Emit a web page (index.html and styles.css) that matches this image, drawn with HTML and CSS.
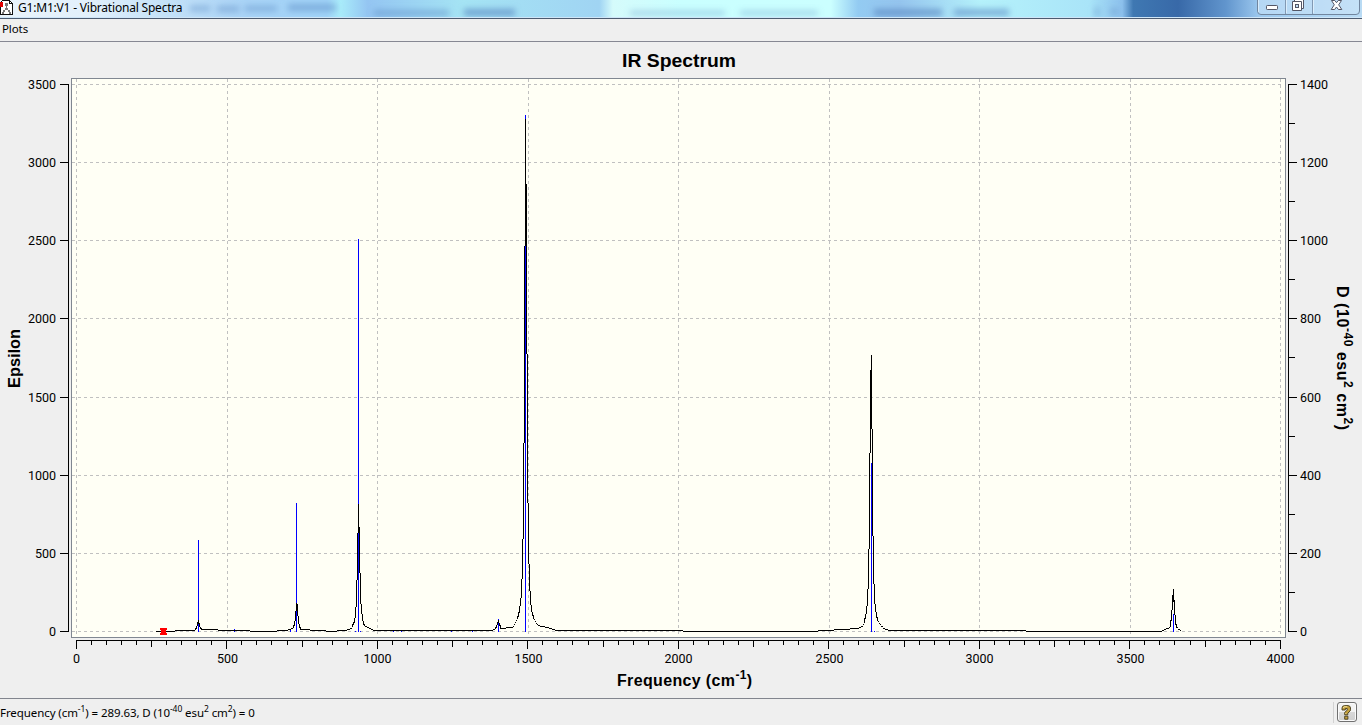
FILE: index.html
```html
<!DOCTYPE html>
<html lang="en">
<head>
<meta charset="utf-8">
<title>G1:M1:V1 - Vibrational Spectra</title>
<link rel="stylesheet" href="styles.css">
</head>
<body>
<div class="window">
  <header class="titlebar">
    <svg class="glass" width="1362" height="17" aria-hidden="true">
      <defs>
        <linearGradient id="sky"><stop offset="0" stop-color="#e9f3fb"/><stop offset=".065" stop-color="#e2f0fb"/><stop offset=".12" stop-color="#c5e2f8"/><stop offset=".18" stop-color="#a9d3f6"/><stop offset=".24" stop-color="#a0d3f8"/><stop offset=".25" stop-color="#a9ecfa"/><stop offset=".27" stop-color="#94c5f2"/><stop offset=".34" stop-color="#a5e4f4"/><stop offset=".44" stop-color="#a0d4f3"/><stop offset=".45" stop-color="#d5fbfb"/><stop offset=".5" stop-color="#c9ffff"/><stop offset=".61" stop-color="#cbffff"/><stop offset=".63" stop-color="#93cbf2"/><stop offset=".66" stop-color="#95c4ee"/><stop offset=".72" stop-color="#b5f2fb"/><stop offset=".8" stop-color="#a9e4f8"/><stop offset=".824" stop-color="#8cc0ec"/><stop offset=".832" stop-color="#3f78b2"/><stop offset=".865" stop-color="#3869a8"/><stop offset=".9" stop-color="#6195cd"/><stop offset=".925" stop-color="#9dc9ef"/><stop offset="1" stop-color="#b9dbf4"/></linearGradient>
        <filter id="soft" x="-5%" y="-100%" width="110%" height="300%"><feGaussianBlur stdDeviation="3"/></filter>
      </defs>
      <rect width="1362" height="17" fill="url(#sky)"/>
      <g filter="url(#soft)" fill="#5f8fc6">
        <rect x="190" y="6" width="20" height="5" opacity=".55"/><rect x="217" y="6" width="22" height="6" opacity=".5"/><rect x="245" y="6" width="32" height="5" opacity=".55"/><rect x="288" y="4" width="48" height="7" opacity=".55"/>
        <rect x="374" y="10" width="75" height="6" opacity=".55"/><rect x="464" y="9" width="51" height="7" opacity=".75"/>
        <rect x="630" y="11" width="95" height="4" opacity=".45"/><rect x="740" y="11" width="78" height="4" opacity=".45"/>
        <rect x="874" y="9" width="68" height="7" opacity=".75"/><rect x="954" y="9" width="55" height="7" opacity=".65"/>
        <rect x="1095" y="7" width="4" height="10" opacity=".5"/><rect x="1110" y="8" width="8" height="7" opacity=".4"/>
      </g>
    </svg>
    <svg class="app-icon" width="14" height="16" viewBox="0 0 14 16" shape-rendering="crispEdges" aria-hidden="true">
      <path d="M2.500 .5H9.500L12.500 3.500V14.500H.5V2.500Z" fill="#fff" stroke="#111"/>
      <path d="M9.500 .5V3.500H12.500" fill="none" stroke="#111"/>
      <path d="M0 2H3V7H0Z" fill="#e00000"/>
      <path d="M5 3H8V6H5ZM6 6H7V8H6ZM5 8H8V10H5ZM3 10H5V12H3ZM8 10H10V12H8ZM2 12H4V14H2ZM9 12H11V14H9Z" fill="#777"/>
    </svg>
    <span class="window-title">G1:M1:V1 - Vibrational Spectra</span>
    <svg class="window-buttons" width="105" height="17" viewBox="1257 0 105 17" aria-hidden="true">
      <path d="M1257.500 -3V11Q1257.500 14.500 1261 14.500H1356Q1359.500 14.500 1359.500 11V-3Z" fill="#d2e8fa" fill-opacity=".45" stroke="#71869f"/>
      <path d="M1285.500 0V14M1312.500 0V14" stroke="#8299b3"/>
      <path d="M1286.500 0V13M1313.500 0V13M1258.500 0V12" stroke="#e9f6ff" opacity=".7"/>
      <rect x="1266.500" y="5.500" width="11" height="4" rx=".8" fill="#fff" stroke="#535666"/>
      <path d="M1294.500 -.5H1303.500V8.500H1294.500Z" fill="#fff" stroke="#535666"/>
      <path d="M1292.500 1.500H1301.500V10.500H1292.500Z" fill="#fff" stroke="#535666"/>
      <rect x="1295.500" y="4.500" width="3" height="3" fill="#c3dff4" stroke="#535666"/>
      <path d="M1331.500 .5H1334.800L1336.500 2.700L1338.200 .5H1341.500L1338.700 4.800L1341.800 9.500H1338.400L1336.500 7L1334.600 9.500H1331.200L1334.300 4.800Z" fill="#fff" stroke="#535666"/>
    </svg>
  </header>
  <nav class="menubar"><span class="menu-item">Plots</span></nav>
  <main class="plot">
    <svg class="chart" width="1362" height="656" viewBox="0 42 1362 656">
      <rect x="71.500" y="78.500" width="1214" height="558.500" fill="#fffff5" stroke="#808791" shape-rendering="crispEdges"/>
      <g id="grid" class="grid"></g>
      <g id="axes" class="axes"></g>
      <g class="trace sticks" transform="translate(.5 0)">
        <path d="M198 540V632M296 503V632M358 239V632M498 619V632M525 115V632M871 463V632M1173 614V632M234 629V632M290 630V632M355 631V632M360 631V632M393 631V632M401 631V632M451 631V632M472 631V632M874 631V632"/>
      </g>
      <g class="trace" transform="translate(.5 0)">
        <path d="M198 620V624M197 622V626M199 623V627M196 626V629M200 627V629M195 628V630M201 628V630"/>
        <path d="M296 603V611M297 604V616M295 611V621M298 616V624M294 621V626M299 624V628M293 625V628M300 627V629"/>
        <path d="M358 504V533M359 527V573M357 533V580M360 573V604M356 580V607M361 604V614M355 607V618M362 614V621M354 618V623M363 621V625M353 622V625M352 624V627M364 624V626"/>
        <path d="M498 620V623M497 622V625M499 623V626M496 625V628M500 625V629M495 627V629"/>
        <path d="M525 119V246M526 184V354M524 246V443M527 354V503M523 443V539M528 503V564M522 539V579M529 564V591M521 579V598M530 591V605M520 598V606M531 605V612M519 606V613M532 612V616M518 612V617M533 615V619M517 616V619"/>
        <path d="M871 355V429M870 370V453M872 429V536M869 453V549M873 536V584M868 549V589M874 584V604M867 589V606M875 604V612M866 606V614M876 612V618M865 614V619M877 617V621M864 618V622"/>
        <path d="M1173 589V602M1172 595V610M1174 600V615M1171 610V621M1175 615V625M1170 620V627M1176 624V627"/>
      </g>
      <g class="trace" transform="translate(0 .5)">
        <path d="M156 631H175M175 630H195M201 629H218M218 630H250M250 631H277M277 630H288M288 629H291M291 628H293M300 629H310M310 630H326M326 631H337M337 630H347M347 629H350M350 628H352M352 626H353M364 625H365M365 626H367M367 627H369M369 628H371M371 629H373M373 630H493M493 629H495M500 628H506M506 627H513M513 626H514M514 624H515M515 622H516M516 620H517M534 619H535M535 621H536M536 623H537M537 624H538M538 625H540M540 626H545M545 627H549M549 628H552M552 629H555M555 630H683M683 631H818M818 630H834M834 629H850M850 628H859M859 627H861M861 626H863M863 624H864M864 622H865M878 621H879M879 623H880M880 624H881M881 626H883M883 628H885M885 629H888M888 630H1026M1026 631H1162M1162 630H1164M1164 629H1166M1166 628H1169M1169 627H1170M1176 627H1178M1178 629H1180M1180 630H1181"/>
      </g>
      <path d="M160 628H167V630H166V633H167V635H160V633H161V630H160Z" fill="#f00" shape-rendering="crispEdges"/>
      <text class="heading" x="622" y="67" textLength="114" lengthAdjust="spacingAndGlyphs">IR Spectrum</text>
      <text class="axis-title frequency" x="617" y="686">Frequency (cm<tspan class="sup" dy="-7">-1</tspan><tspan dy="7">)</tspan></text>
      <text class="axis-title" transform="translate(20 388) rotate(-90)" textLength="59" lengthAdjust="spacingAndGlyphs">Epsilon</text>
      <text class="axis-title side" transform="translate(1337 286) rotate(90)">D (10<tspan class="sup" dy="-7">-40</tspan><tspan dy="7"> esu</tspan><tspan class="sup" dy="-7">2</tspan><tspan dy="7"> cm</tspan><tspan class="sup" dy="-7">2</tspan><tspan dy="7">)</tspan></text>
      <g id="labels" class="tick-labels"></g>
    </svg>
  </main>
  <footer class="statusbar">
    <span class="status-text">Frequency (cm<sup>-1</sup>) = 289.63, D (10<sup>-40</sup> esu<sup>2</sup> cm<sup>2</sup>) = 0</span>
    <div class="help-area">
      <button class="help" aria-label="Help">
        <svg width="12" height="15" viewBox="0 0 12 15"><path d="M1 5V3Q1 .7 3.500 .6H7Q9.500 .8 9.500 3V4.800Q9.500 6 8 7L6.800 8.200V9.800H3.700V7.400L6.200 5.200V3.500H4.300V5ZM3.700 11.200H6.900V14.200H3.700Z" fill="#c4a13d" stroke="#443a1b" stroke-width=".9"/><path d="M2.300 3Q2.500 1.600 4 1.700H6.200M4.800 8.200V9" fill="none" stroke="#f1df99"/></svg>
      </button>
    </div>
  </footer>
</div>
<script src="chart.js"></script>
</body>
</html>
```
FILE: styles.css
```css
* { box-sizing: border-box; }
body { margin: 0; background: #efefef; color: #000; font-family: "Noto Sans", "Open Sans", sans-serif; }
.window { display: flex; flex-direction: column; width: 1362px; height: 725px; overflow: hidden; }
.titlebar { position: relative; display: flex; align-items: flex-start; height: 19px; flex: none; background: #cfe6f8; border-bottom: 1px solid #4c5b70; }
.glass { position: absolute; left: 0; top: 0; }
.app-icon, .window-title, .window-buttons { position: relative; }
.window-title { margin-left: 4px; font-size: 12px; line-height: 15px; letter-spacing: -.2px; white-space: nowrap; }
.window-buttons { margin-left: auto; }
.menubar { height: 23px; flex: none; padding-left: 2px; border-bottom: 1px solid #868893; font-size: 11.500px; line-height: 20px; letter-spacing: -.1px; }
.plot { height: 656px; flex: none; }
.chart { display: block; }
.grid path { fill: none; stroke: #c0c0c0; stroke-dasharray: 3 3; shape-rendering: crispEdges; }
.axes path { fill: none; stroke: #000; shape-rendering: crispEdges; }
.trace path { fill: none; stroke: #000; shape-rendering: crispEdges; }
.sticks path { stroke: #00f; }
.heading { font: bold 19px "Liberation Sans", Arial, sans-serif; }
.axis-title { font: bold 16px "Liberation Sans", Arial, sans-serif; }
.frequency { letter-spacing: .35px; }
.side { letter-spacing: .55px; }
.sup { font-size: 12px; }
.tick-labels text { font: 12.500px Roboto, sans-serif; }
.statusbar { display: flex; align-items: center; justify-content: space-between; height: 27px; flex: none; border-top: 1px solid #82858e; font-size: 11.500px; }
.status-text { white-space: nowrap; line-height: 16px; padding-top: 1px; letter-spacing: -.08px; }
.status-text sup { font-size: 8.500px; line-height: 0; vertical-align: 5px; }
.help-area { display: flex; width: 29px; height: 21px; padding-left: 3px; border-left: 1px solid #d2d2d2; margin-top: 1px; }
.help { display: flex; align-items: center; justify-content: center; width: 20px; height: 20px; padding: 0; border: 1px solid #707070; border-radius: 3px; box-shadow: inset 0 0 0 1px #fafafa; background: linear-gradient(#f2f2f2 50%, #d8d8d8 50%, #cfcfcf); }
```
FILE: chart.js
```js
const NS = 'http://www.w3.org/2000/svg';
const xs = [76, 227, 377, 528, 678, 829, 979, 1130, 1280];
const ys = [84, 162, 240, 318, 397, 475, 553, 631];

function addPath(parent, d) {
  const path = document.createElementNS(NS, 'path');
  path.setAttribute('d', d);
  document.getElementById(parent).append(path);
}

function addLabel(x, y, anchor, value) {
  const text = document.createElementNS(NS, 'text');
  text.setAttribute('x', x);
  text.setAttribute('y', y);
  text.setAttribute('text-anchor', anchor);
  text.textContent = value;
  document.getElementById('labels').append(text);
}

xs.forEach((x, i) => {
  addPath('grid', `M${x + .5} 79V636`);
  addLabel(x + .5, 663, 'middle', i * 500);
});
ys.forEach((y, i) => {
  addPath('grid', `M72 ${y + .5}H1281`);
  addLabel(56, y + 5, 'end', (7 - i) * 500);
  addLabel(1300, y + 5, 'start', (7 - i) * 200);
});

let axes = 'M68.5 84V632M76 640.5H1281M1288.5 84V632';
ys.forEach((y, i) => {
  axes += `M60 ${y + .5}H69M1288 ${y + .5}H1297`;
  if (i < 7) axes += `M1288 ${Math.floor((y + ys[i + 1]) / 2) + .5}H1295`;
});
for (let i = 0; i <= 80; i++) {
  const x = Math.floor(76.3 + i * 15.05) + .5;
  axes += `M${x} 640V${i % 10 === 0 ? 649 : i % 5 === 0 ? 647 : 645}`;
}
addPath('axes', axes);
```
